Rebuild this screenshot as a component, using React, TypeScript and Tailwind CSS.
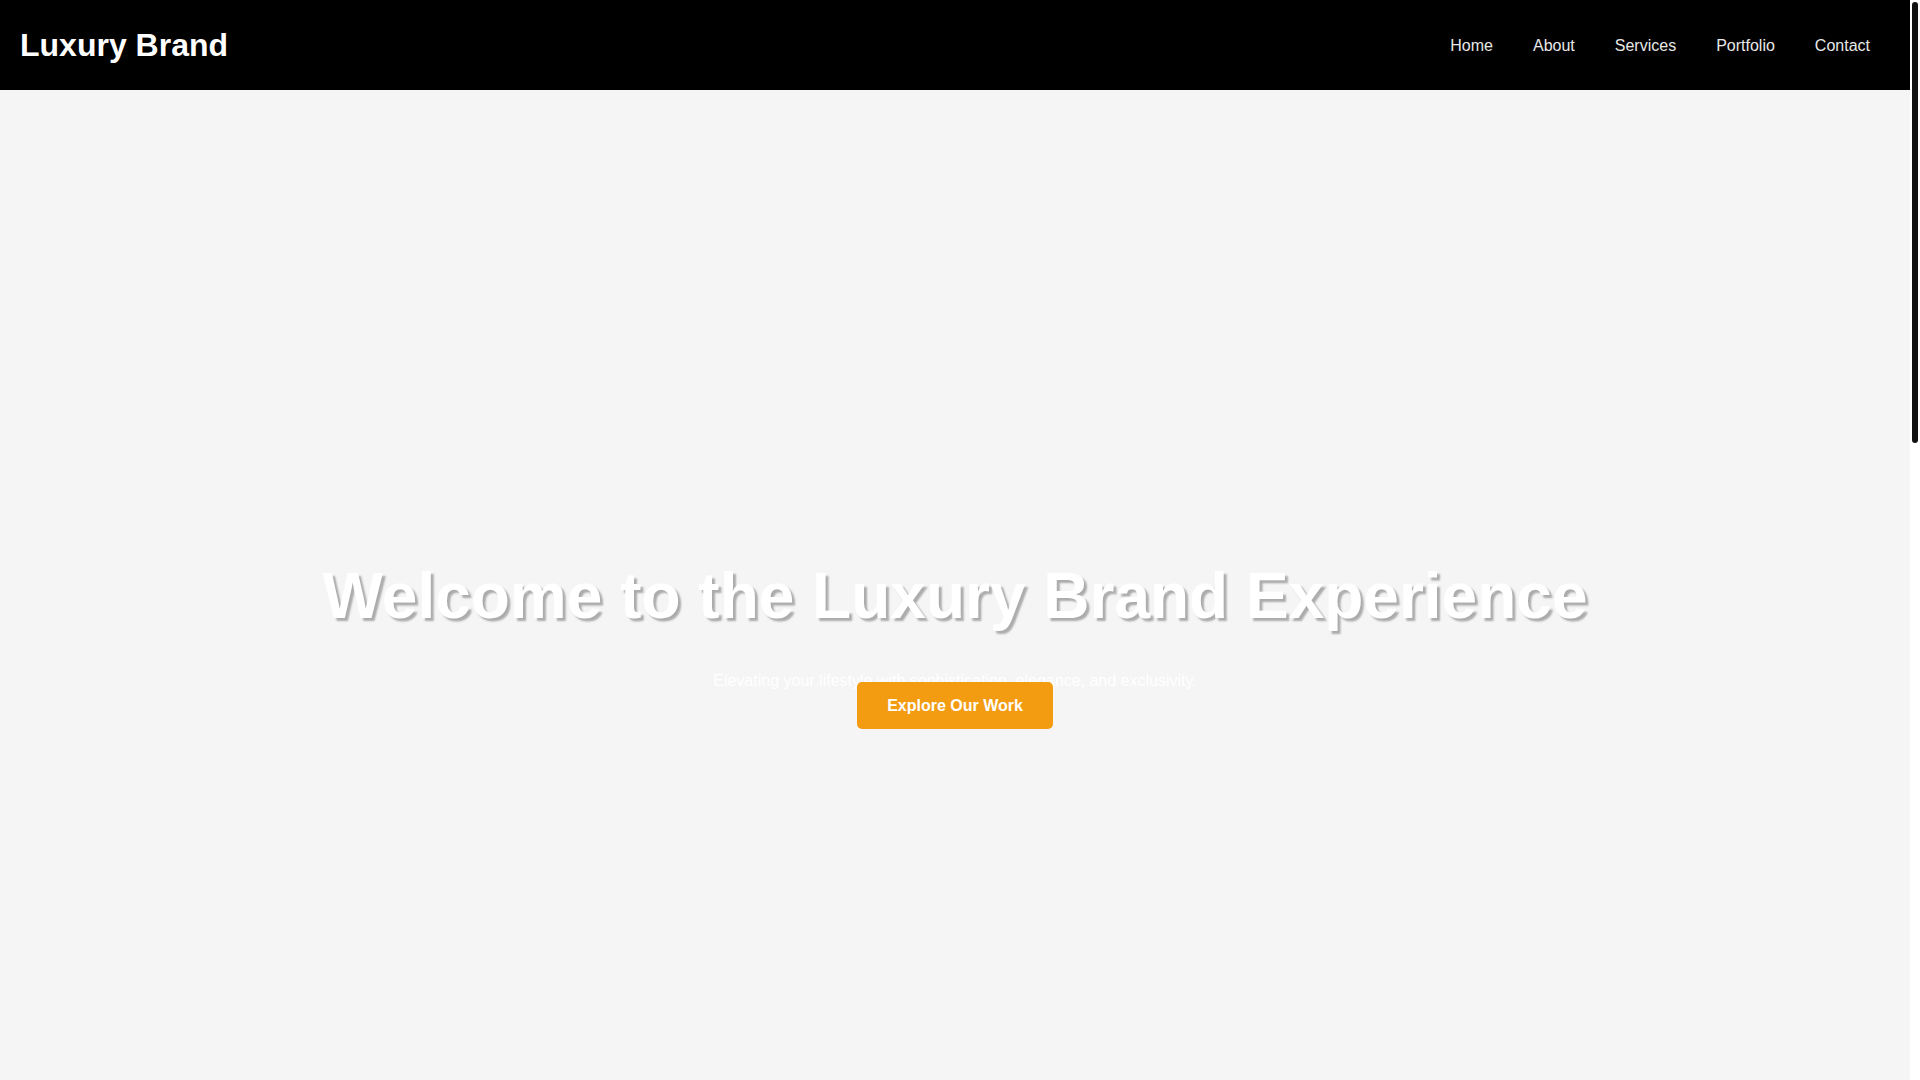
const links = ['Home', 'About', 'Services', 'Portfolio', 'Contact']

export default function App() {
  return (
    <div className="h-screen flex bg-white font-['Liberation_Sans',Arial,sans-serif]">
      <div className="flex-1 overflow-hidden bg-[#f5f5f5]">
        {/* Header */}
        <header className="h-[90px] bg-black flex items-center justify-between pl-5 pr-10">
          <div className="text-[32px] font-bold text-white leading-none">Luxury Brand</div>
          <nav className="flex items-center gap-10 pt-[2px]">
            {links.map((l) => (
              <a key={l} href="#" className="text-base text-[#e8e8e8] leading-normal">
                {l}
              </a>
            ))}
          </nav>
        </header>

        {/* Hero */}
        <section className="h-[1120px] pb-[13px] flex flex-col items-center justify-center text-center">
          <h1 className="text-[64px] font-bold leading-[1.2] text-white [text-shadow:3px_3px_2px_rgba(0,0,0,0.3)]">
            Welcome to the Luxury Brand Experience
          </h1>
          <p className="mt-[35px] text-base leading-6 text-white">
            Elevating your lifestyle with sophistication, elegance, and exclusivity.
          </p>
          <button className="-mt-[11px] h-[47px] px-[30px] rounded-[5px] bg-[#f39c12] text-white text-base font-bold">
            Explore Our Work
          </button>
        </section>
      </div>

      {/* scrollbar */}
      <div className="w-[10px] bg-white pt-[2px] flex justify-center">
        <div className="w-[6px] h-[441px] rounded-full bg-[#111]" />
      </div>
    </div>
  )
}
